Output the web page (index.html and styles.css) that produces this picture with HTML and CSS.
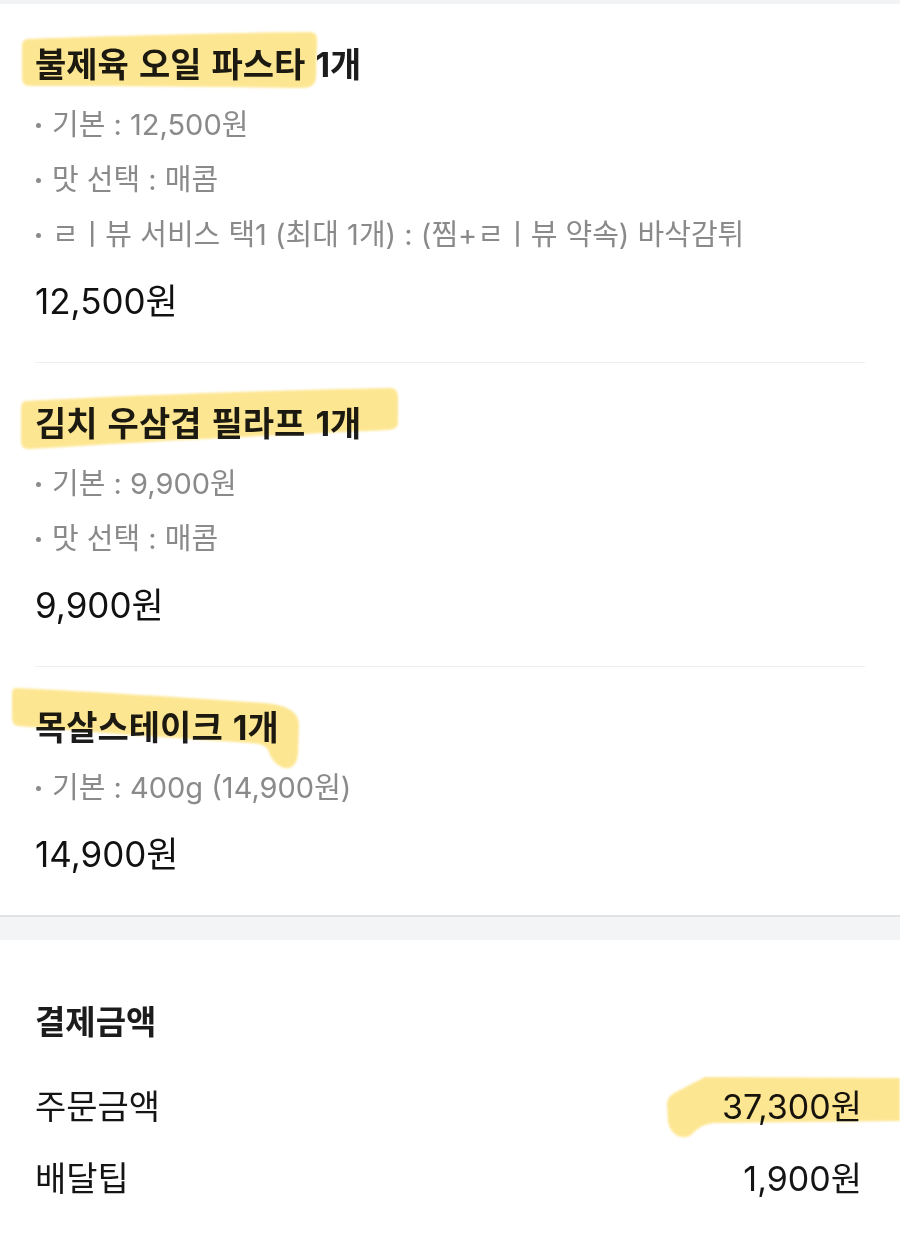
FILE: index.html
```html
<!DOCTYPE html>
<html lang="ko">
<head>
<meta charset="utf-8">
<link rel="stylesheet" href="styles.css">
</head>
<body>
<div class="topbar"></div>
<section class="items">
  <article class="item">
    <h2 class="title">
      <svg class="hl hl1" width="300" height="62" viewBox="0 0 300 62"><path d="M8,9 C80,6 200,3 290,2 Q298,2 297,12 L296,48 Q295,58 282,58 C200,57 90,56 10,56 Q2,56 2,48 L2,16 Q2,9 8,9 Z"/></svg>
      <span class="ttext">불제육 오일 파스타 1개</span>
    </h2>
    <ul class="opts">
      <li>기본 : 12,500원</li>
      <li>맛 선택 : 매콤</li>
      <li>ㄹㅣ뷰 서비스 택1 (최대 1개) : (찜+ㄹㅣ뷰 약속) 바삭감튀</li>
    </ul>
    <div class="price">12,500원</div>
  </article>
  <article class="item">
    <h2 class="title">
      <svg class="hl hl2" width="382" height="67" viewBox="0 0 382 67"><path d="M8,16 C120,10 260,5 372,3 Q380,3 380,12 L380,38 Q380,44 370,45 C260,50 120,57 12,64 Q3,65 3,56 L3,24 Q3,16 8,16 Z"/></svg>
      <span class="ttext">김치 우삼겹 필라프 1개</span>
    </h2>
    <ul class="opts">
      <li>기본 : 9,900원</li>
      <li>맛 선택 : 매콤</li>
    </ul>
    <div class="price">9,900원</div>
  </article>
  <article class="item">
    <h2 class="title">
      <svg class="hl hl3" width="292" height="88" viewBox="0 0 292 88"><path d="M6,4 C90,8 180,14 255,19 Q288,22 289,40 L288,70 Q286,86 274,84 Q262,80 258,66 Q256,60 240,59 C160,54 80,48 8,42 Q2,41 2,34 L2,10 Q2,4 6,4 Z"/></svg>
      <span class="ttext">목살스테이크 1개</span>
    </h2>
    <ul class="opts">
      <li>기본 : 400g (14,900원)</li>
    </ul>
    <div class="price">14,900원</div>
  </article>
</section>
<div class="band"></div>
<section class="summary">
  <h3 class="sum-title">결제금액</h3>
  <div class="row">
    <span>주문금액</span>
    <span>37,300원</span>
    <svg class="hl hl4" width="236" height="66" viewBox="0 0 236 66"><path d="M41,3 L236,4 L236,47 L50,49 Q38,50 30,58 Q24,66 14,62 Q6,58 4,48 L3,30 Q3,22 12,18 Z"/></svg>
  </div>
  <div class="row">
    <span>배달팁</span>
    <span>1,900원</span>
  </div>
</section>
</body>
</html>
```

FILE: styles.css
```css
* { box-sizing: border-box; }
html, body { margin: 0; padding: 0; background: #ffffff; }
body {
  font-family: "Inter", "Noto Sans CJK KR", sans-serif;
  color: #1b1b1b;
  width: 900px;
  overflow: hidden;
}
.topbar { height: 4px; background: #f2f3f5; }
.items { padding: 0 35px; }
.item {
  padding: 41px 0 41px;
  border-bottom: 1px solid #eeeeee;
}
.item:last-child { border-bottom: none; }
.title {
  position: relative;
  margin: 0;
  height: 40px;
  line-height: 40px;
  font-size: 34px;
  font-weight: 700;
  word-spacing: 2px;
  color: #1c1c1c;
  white-space: nowrap;
}
.ttext { position: relative; }
.opts {
  list-style: none;
  margin: 12px 0 0;
  padding: 0;
}
.opts li {
  position: relative;
  height: 55px;
  line-height: 55px;
  font-size: 29px;
  color: #8a8a8a;
  padding-left: 17px;
  white-space: nowrap;
}
.opts li::before {
  content: "";
  position: absolute;
  left: 1px;
  top: 26px;
  width: 5px;
  height: 5px;
  border-radius: 50%;
  background: #8a8a8a;
}
.price {
  margin-top: 19px;
  height: 40px;
  line-height: 40px;
  font-size: 35px;
  color: #111111;
}
.band {
  height: 25px;
  background: #f3f4f6;
  border-top: 2px solid #e2e3e5;
}
.summary { padding: 62px 38px 40px 35px; }
.sum-title {
  margin: 0 0 29px;
  height: 40px;
  line-height: 40px;
  font-size: 33px;
  font-weight: 700;
  color: #1c1c1c;
}
.row {
  position: relative;
  display: flex;
  justify-content: space-between;
  height: 72px;
  line-height: 72px;
  font-size: 34px;
  color: #151515;
}
.row span { position: relative; z-index: 1; }
.hl {
  position: absolute;
  fill: #fde27f;
  opacity: 0.85;
  mix-blend-mode: multiply;
  filter: blur(1px);
  z-index: 2;
  pointer-events: none;
}
.hl1 { left: -15px; top: -15px; }
.hl2 { left: -17px; top: -19px; }
.hl3 { left: -25px; top: -24px; }
.hl4 { right: -38px; top: 3px; }
```
